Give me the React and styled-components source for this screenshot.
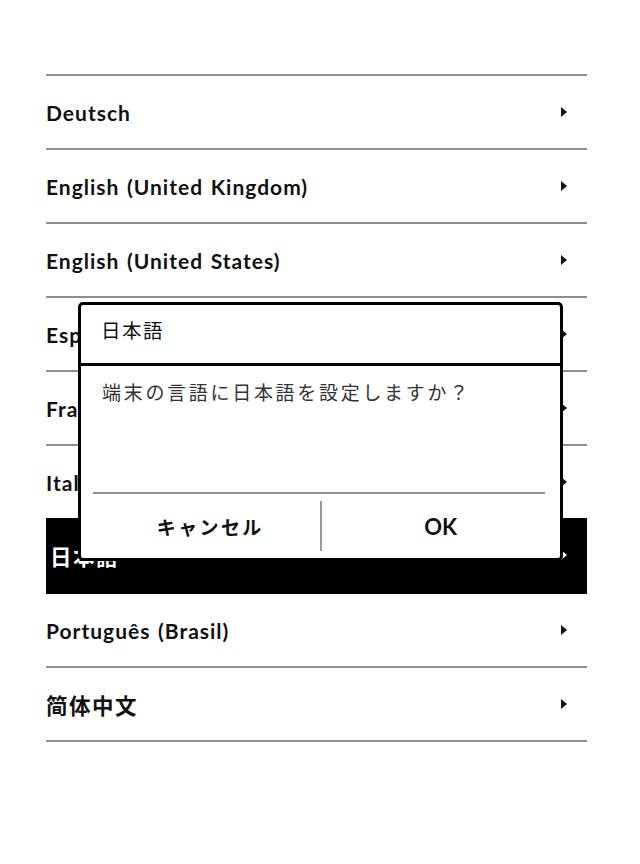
import React from "react";
import styled, { createGlobalStyle } from "styled-components";

const GlobalStyle = createGlobalStyle`
  html, body {
    margin: 0;
    padding: 0;
    background: #fff;
  }
  body {
    font-family: Lato, "Noto Sans CJK JP", sans-serif;
    color: #111;
  }
`;

const Screen = styled.div`
  position: relative;
  width: 640px;
  height: 864px;
  overflow: hidden;
  background: #fff;
`;

const List = styled.ul`
  list-style: none;
  margin: 0;
  padding: 0;
  margin: 74px 53px 0 46px;
  border-top: 2px solid #8e8e8e;
`;

const Row = styled.li`
  display: flex;
  align-items: center;
  justify-content: space-between;
  border-bottom: 2px solid ${(p) => (p.selected ? "#000" : "#8e8e8e")};
  background: ${(p) => (p.selected ? "#000" : "transparent")};
  color: ${(p) => (p.selected ? "#fff" : "#111")};
  margin-top: ${(p) => (p.selected ? "-2px" : "0")};
  height: ${(p) => (p.selected ? "74px" : "72px")};
  padding-left: ${(p) => (p.selected ? "4px" : "0")};
`;

const Label = styled.span`
  font-family: Lato, "Noto Sans CJK JP", sans-serif;
  font-weight: 700;
  font-size: ${(p) => (p.cjk ? "21.5px" : "21px")};
  letter-spacing: ${(p) => (p.cjk ? "1.5px" : "1px")};
  word-spacing: 1.5px;
`;

const Arrow = styled.span`
  width: 0;
  height: 0;
  margin-right: 20px;
  border-top: 5px solid transparent;
  border-bottom: 5px solid transparent;
  border-left: 6px solid ${(p) => (p.light ? "#fff" : "#111")};
`;

const Dialog = styled.div`
  position: absolute;
  left: 78px;
  top: 302px;
  width: 485px;
  height: 259px;
  box-sizing: border-box;
  border: 3px solid #000;
  border-radius: 5px;
  background: #fff;
  display: flex;
  flex-direction: column;
`;

const DialogHeader = styled.div`
  height: 61px;
  box-sizing: border-box;
  display: flex;
  align-items: center;
  padding: 0 0 10px 20px;
  border-bottom: 3px solid #000;
  font-family: "Noto Sans CJK JP", sans-serif;
  font-size: 19.5px;
  letter-spacing: 1.5px;
  color: #111;
`;

const DialogBody = styled.div`
  flex: 1;
  padding: 12px 0 0 21px;
  font-family: "Noto Sans CJK JP", sans-serif;
  font-size: 19px;
  letter-spacing: 2.7px;
  color: #333;
`;

const Rule = styled.div`
  height: 2px;
  margin: 0 15px 0 12px;
  background: #8e8e8e;
`;

const Buttons = styled.div`
  height: 64px;
  display: grid;
  grid-template-columns: 1fr 2px 1fr;
  align-items: center;
`;

const DialogButton = styled.button`
  height: 50px;
  box-sizing: border-box;
  border: none;
  background: transparent;
  padding: ${(p) => (p.latin ? "0 0 0 0" : "0 0 0 20px")};
  font-family: Lato, "Noto Sans CJK JP", sans-serif;
  font-weight: 700;
  font-size: ${(p) => (p.latin ? "22px" : "19px")};
  letter-spacing: ${(p) => (p.latin ? "0" : "2.4px")};
  color: #111;
`;

const Divider = styled.div`
  width: 2px;
  height: 50px;
  background: #9a9a9a;
`;

const languages = [
  { name: "Deutsch" },
  { name: "English (United Kingdom)" },
  { name: "English (United States)" },
  { name: "Español" },
  { name: "Français" },
  { name: "Italiano" },
  { name: "日本語", cjk: true, selected: true },
  { name: "Português (Brasil)" },
  { name: "简体中文", cjk: true },
];

export default function App() {
  return (
    <Screen>
      <GlobalStyle />
      <List>
        {languages.map((l) => (
          <Row key={l.name} selected={l.selected}>
            <Label cjk={l.cjk}>{l.name}</Label>
            <Arrow light={l.selected} />
          </Row>
        ))}
      </List>
      <Dialog>
        <DialogHeader>日本語</DialogHeader>
        <DialogBody>端末の言語に日本語を設定しますか？</DialogBody>
        <Rule />
        <Buttons>
          <DialogButton>キャンセル</DialogButton>
          <Divider />
          <DialogButton latin>OK</DialogButton>
        </Buttons>
      </Dialog>
    </Screen>
  );
}
